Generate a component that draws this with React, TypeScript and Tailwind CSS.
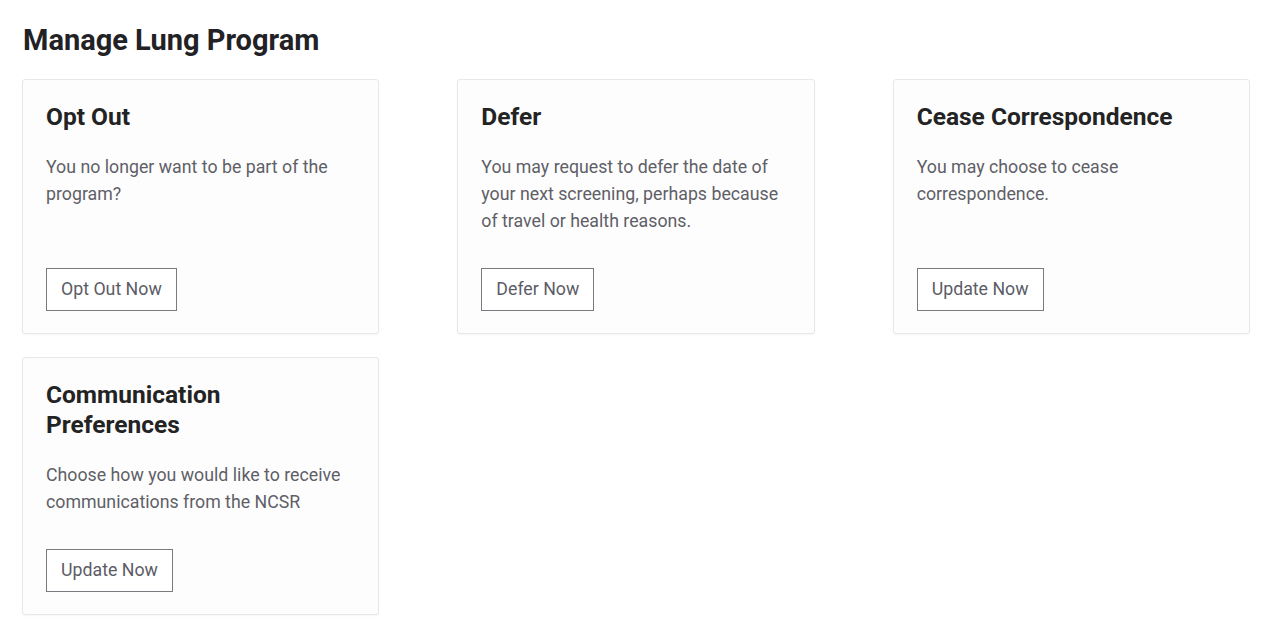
import React from "react";

type Option = {
    title: string;
    text: string;
    action: string;
};

const options: Option[] = [
    { title: "Opt Out", text: "You no longer want to be part of the program?", action: "Opt Out Now" },
    {
        title: "Defer",
        text: "You may request to defer the date of your next screening, perhaps because of travel or health reasons.",
        action: "Defer Now",
    },
    { title: "Cease Correspondence", text: "You may choose to cease correspondence.", action: "Update Now" },
    {
        title: "Communication Preferences",
        text: "Choose how you would like to receive communications from the NCSR",
        action: "Update Now",
    },
];

const OptionCard = ({ title, text, action }: Option) => {
    return (
        <div className="flex flex-col rounded-[3px] border border-[#e8e8ea] bg-[#fdfdfe] px-[23px] pt-[22px] pb-[22px] shadow-[0_1px_2px_rgba(0,0,0,0.04)]">
            <h2 className="text-[24.5px] leading-[30px] font-bold text-[#232323] pr-10">{title}</h2>
            <p className="mt-[22px] text-[17.75px] leading-[27px] text-[#5f5f66]">{text}</p>
            {/* button sits on the card's bottom edge */}
            <div className="mt-auto pt-[33px]">
                <button className="h-[43px] border border-[#7a7a80] bg-white px-[14px] text-[17.75px] text-[#5c5c66]">
                    {action}
                </button>
            </div>
        </div>
    );
};

export default function App() {
    return (
        <div className="min-h-screen bg-white pl-[22px] pr-[30px] pt-[24px] font-['Roboto',sans-serif]">
            <h1 className="pl-[1px] text-[29px] leading-[32px] font-bold text-[#222226]">Manage Lung Program</h1>
            <div className="mt-[23px] grid grid-cols-3 gap-x-[78px] gap-y-[23px]">
                {options.map((o) => (
                    <OptionCard key={o.title} {...o} />
                ))}
            </div>
        </div>
    );
}
